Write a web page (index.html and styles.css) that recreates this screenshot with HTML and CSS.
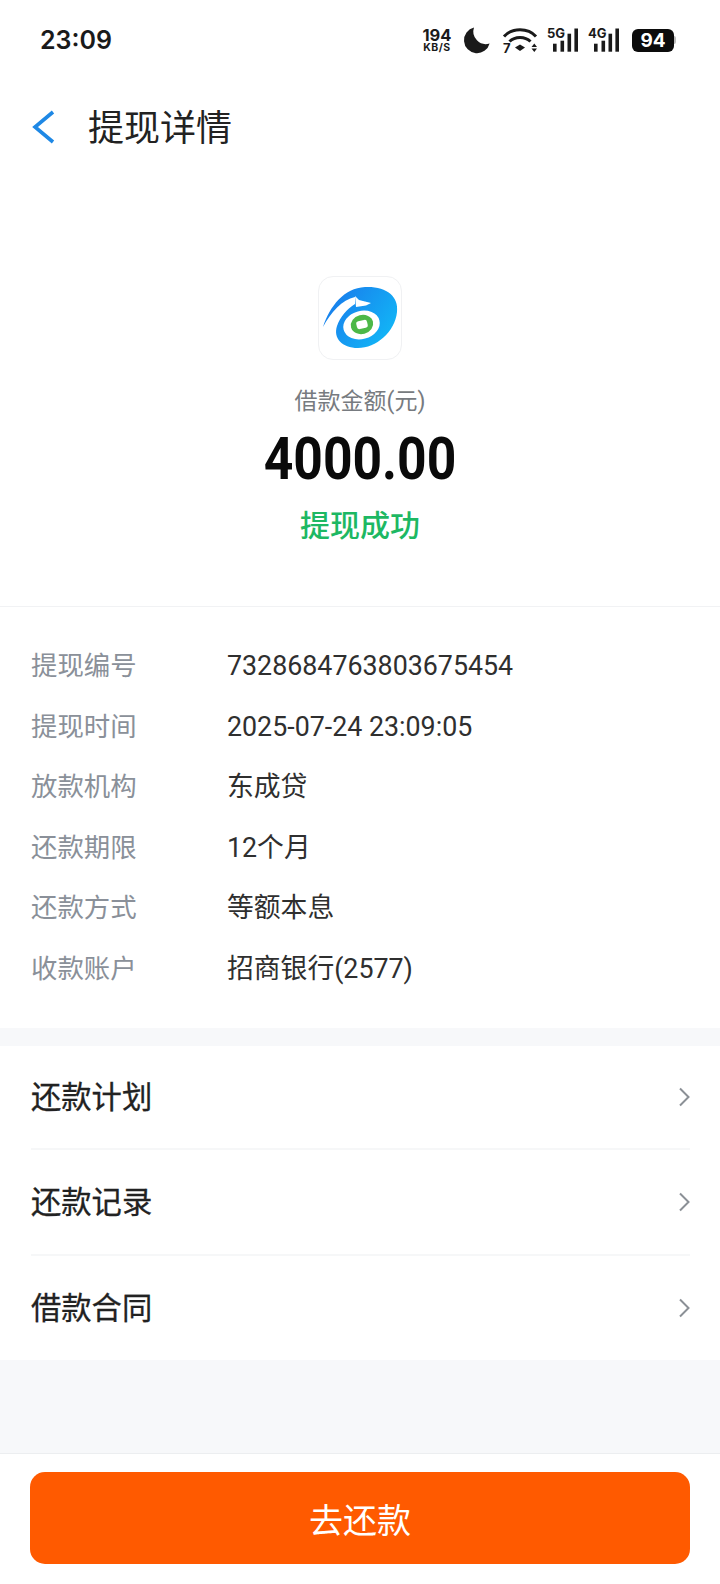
FILE: index.html
```html
<!DOCTYPE html>
<html>
<head>
    <title>提现详情</title>
    <link rel="stylesheet" href="styles.css">
</head>
<body>
    <div class="page">
        <!-- Status bar -->
        <div class="status-bar">
            <span class="clock">23:09</span>
            <div class="status-icons">
                <div class="net-speed"><span class="speed-num">194</span><span class="speed-unit">KB/S</span></div>
                <svg class="moon" width="26" height="26" viewBox="0 0 26 26"><path d="M10 0.6 A13 13 0 1 0 25.6 16.5 A12.5 12.5 0 0 1 10 0.6 Z" fill="#1a1a1a"/></svg>
                <svg class="wifi" width="34" height="32" viewBox="0 -3 34 32">
                    <path d="M1 9.5 C9 0.5 25 0.5 33 9.5" fill="none" stroke="#1a1a1a" stroke-width="3"/>
                    <path d="M6.5 14.5 C12 9 22 9 27.5 14.5" fill="none" stroke="#1a1a1a" stroke-width="3"/>
                    <path d="M12 20.5 L17 17.5 L22 20.5 L17 24 Z" fill="#1a1a1a"/>
                    <text x="0" y="25.5" class="wifi-num">7</text>
                    <path d="M28.5 20 L31.3 16.5 L34 20 Z M28.5 21.5 L34 21.5 L31.3 25 Z" fill="#1a1a1a"/>
                </svg>
                <svg class="signal" width="31" height="26" viewBox="0 0 31 26">
                    <text x="0" y="10.5" class="sig-text">5G</text>
                    <rect x="6" y="16.7" width="3.6" height="8"/>
                    <rect x="13.5" y="13.7" width="3.6" height="11"/>
                    <rect x="20.5" y="6.7" width="3.6" height="18"/>
                    <rect x="27.4" y="1.5" width="3.6" height="23.2"/>
                </svg>
                <svg class="signal" width="31" height="26" viewBox="0 0 31 26">
                    <text x="0" y="10.5" class="sig-text">4G</text>
                    <rect x="6" y="16.7" width="3.6" height="8"/>
                    <rect x="13.5" y="13.7" width="3.6" height="11"/>
                    <rect x="20.5" y="6.7" width="3.6" height="18"/>
                    <rect x="27.4" y="1.5" width="3.6" height="23.2"/>
                </svg>
                <div class="battery"><span class="battery-body">94</span><span class="battery-nub"></span></div>
            </div>
        </div>

        <!-- Title -->
        <div class="nav-bar">
            <svg class="back" width="24" height="34" viewBox="0 0 24 34"><path d="M21 2 L3 17 L21 32" fill="none" stroke="#1e88e5" stroke-width="3.6"/></svg>
            <span class="nav-title">提现详情</span>
        </div>

        <!-- Amount -->
        <div class="hero">
            <div class="logo-tile">
                <svg width="84" height="84" viewBox="0 0 84 84">
                    <defs>
                        <linearGradient id="logoBlue" x1="0" y1="0" x2="1" y2="0.6">
                            <stop offset="0" stop-color="#1a74ea"/>
                            <stop offset="1" stop-color="#12b4f6"/>
                        </linearGradient>
                    </defs>
                    <path d="M5 51 C12 30 26 12 47 11 C68 10 81 20 79 36 C77 56 58 72 40 72 C24 72 15 62 19 50 C22 41 29 33 37 28 L37 21 C24 24 13 36 5 51 Z" fill="url(#logoBlue)"/>
                    <ellipse cx="43.5" cy="49" rx="18.5" ry="14" transform="rotate(-15 43.5 49)" fill="#fff"/>
                    <path d="M37 20 L38 31 L48 29.5 L53 27 L47 25.5 L41 24 Z" fill="#fff"/>
                    <ellipse cx="44" cy="48.5" rx="11.3" ry="9.5" transform="rotate(-15 44 48.5)" fill="#4cb848"/>
                    <rect x="38.5" y="44.5" width="11" height="8" rx="2.5" transform="rotate(-12 44 48.5)" fill="#fff"/>
                </svg>
            </div>
            <div class="hero-label">借款金额(元)</div>
            <div class="amount">4000.00</div>
            <div class="hero-status">提现成功</div>
        </div>

        <!-- Details -->
        <div class="details">
            <div class="detail-row"><span class="detail-label">提现编号</span><span class="detail-value">7328684763803675454</span></div>
            <div class="detail-row"><span class="detail-label">提现时间</span><span class="detail-value">2025-07-24 23:09:05</span></div>
            <div class="detail-row"><span class="detail-label">放款机构</span><span class="detail-value">东成贷</span></div>
            <div class="detail-row"><span class="detail-label">还款期限</span><span class="detail-value">12个月</span></div>
            <div class="detail-row"><span class="detail-label">还款方式</span><span class="detail-value">等额本息</span></div>
            <div class="detail-row"><span class="detail-label">收款账户</span><span class="detail-value">招商银行(2577)</span></div>
        </div>

        <!-- Links -->
        <div class="menu">
            <div class="menu-row">
                <span class="menu-text">还款计划</span>
                <svg width="11" height="20" viewBox="0 0 11 20"><path d="M1 1.5 L9.5 10 L1 18.5" fill="none" stroke="#8b9096" stroke-width="2"/></svg>
            </div>
            <div class="menu-row">
                <span class="menu-text">还款记录</span>
                <svg width="11" height="20" viewBox="0 0 11 20"><path d="M1 1.5 L9.5 10 L1 18.5" fill="none" stroke="#8b9096" stroke-width="2"/></svg>
            </div>
            <div class="menu-row">
                <span class="menu-text">借款合同</span>
                <svg width="11" height="20" viewBox="0 0 11 20"><path d="M1 1.5 L9.5 10 L1 18.5" fill="none" stroke="#8b9096" stroke-width="2"/></svg>
            </div>
        </div>

        <div class="spacer"></div>

        <div class="footer">
            <button class="repay-btn">去还款</button>
        </div>
    </div>
</body>
</html>
```

FILE: styles.css
```css
body {
    margin: 0;
    padding: 0;
    background-color: #f7f8fa;
    color: #222;
    font-family: Roboto, "Noto Sans CJK SC", sans-serif;
}

.page {
    display: flex;
    flex-direction: column;
    height: 1584px;
    overflow: hidden;
}

/* Status bar */
.status-bar {
    display: flex;
    justify-content: space-between;
    align-items: center;
    height: 80px;
    box-sizing: border-box;
    padding: 0 44px 0 40px;
    background-color: #fff;
}

.clock {
    font-family: Inter, sans-serif;
    font-size: 25px;
    font-weight: 600;
    color: #1a1a1a;
}

.status-icons {
    display: flex;
    align-items: center;
    gap: 10px;
}

.status-icons svg {
    overflow: visible;
}

.net-speed {
    display: flex;
    flex-direction: column;
    align-items: center;
    width: 30px;
    margin-right: 2px;
    font-family: Inter, sans-serif;
    font-weight: 700;
    color: #1a1a1a;
}

.speed-num {
    font-size: 16.5px;
    line-height: 16.5px;
}

.speed-unit {
    font-size: 10.5px;
    line-height: 10.5px;
    letter-spacing: 0.5px;
}

.moon {
    margin-right: 3px;
}

.wifi-num {
    font-family: Inter, sans-serif;
    font-size: 13px;
    font-weight: 700;
    fill: #1a1a1a;
}

.sig-text {
    font-family: Inter, sans-serif;
    font-size: 13px;
    font-weight: 700;
    fill: #1a1a1a;
}

.signal rect {
    fill: #1a1a1a;
}

.battery {
    display: flex;
    align-items: center;
    margin-left: 3px;
}

.battery-body {
    width: 42px;
    height: 23px;
    line-height: 23px;
    border-radius: 6px;
    background-color: #0c0c0c;
    color: #fff;
    text-align: center;
    font-family: Inter, sans-serif;
    font-size: 19px;
    font-weight: 700;
}

.battery-nub {
    width: 2px;
    height: 8px;
    border-radius: 0 2px 2px 0;
    background-color: #bbb;
}

/* Nav */
.nav-bar {
    display: flex;
    align-items: center;
    height: 94px;
    padding-left: 32px;
    background-color: #fff;
}

.nav-title {
    margin-left: 32px;
    margin-bottom: 4px;
    font-size: 36px;
    color: #222;
}

/* Hero */
.hero {
    display: flex;
    flex-direction: column;
    align-items: center;
    height: 433px;
    box-sizing: border-box;
    padding-top: 102px;
    background-color: #fff;
    border-bottom: 1px solid #f1f2f4;
}

.logo-tile {
    width: 84px;
    height: 84px;
    box-sizing: border-box;
    border: 1px solid #f0f1f3;
    border-radius: 15px;
    overflow: hidden;
}

.logo-tile svg {
    display: block;
    margin: -1px;
}

.hero-label {
    margin-top: 26px;
    font-size: 23px;
    line-height: 32px;
    color: #777b80;
}

.amount {
    margin-top: 5px;
    font-family: Roboto, sans-serif;
    font-size: 60px;
    line-height: 72px;
    font-weight: 700;
    color: #0a0a0a;
    transform: scaleX(0.86);
}

.hero-status {
    margin-top: 10px;
    font-size: 30px;
    line-height: 42px;
    font-weight: 500;
    color: #1db863;
}

/* Details */
.details {
    height: 421px;
    box-sizing: border-box;
    padding-top: 29px;
    background-color: #fff;
}

.detail-row {
    display: flex;
    align-items: baseline;
    height: 60.6px;
    line-height: 60.6px;
    padding-left: 31px;
    font-size: 26.4px;
}

.detail-label {
    width: 196px;
    color: #8a9099;
}

.detail-value {
    color: #2f2f2f;
    font-size: 26.8px;
}

/* Menu */
.menu {
    margin-top: 18px;
    padding: 0 30px 0 31px;
    background-color: #fff;
}

.menu-row {
    display: flex;
    justify-content: space-between;
    align-items: center;
    height: 104px;
    border-bottom: 2px solid #f6f7f8;
    font-size: 30.3px;
    color: #222;
}

.menu-row:first-child {
    height: 102px;
}

.menu-row:last-child {
    height: 104px;
    border-bottom: 0;
}

.menu-text {
    margin-bottom: 5px;
    -webkit-text-stroke: 0.3px #222;
}

.spacer {
    flex: 1;
}

/* Footer */
.footer {
    box-sizing: border-box;
    height: 131px;
    padding: 18px 30px 20px;
    background-color: #fff;
    border-top: 1px solid #eceef0;
}

.repay-btn {
    display: block;
    width: 100%;
    height: 92px;
    border: 0;
    border-radius: 15px;
    background-color: #ff5a00;
    color: #fff;
    font-family: "Noto Sans CJK SC", sans-serif;
    font-size: 34px;
}
```
